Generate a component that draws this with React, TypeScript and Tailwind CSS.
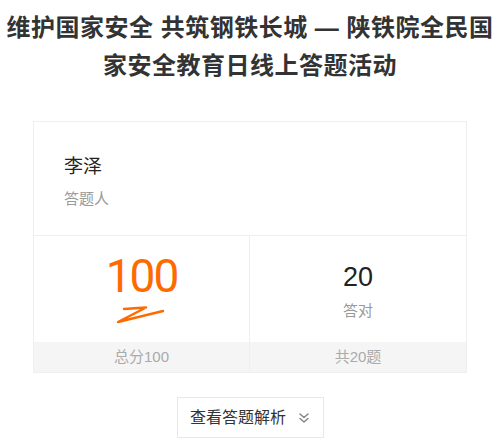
export default function App() {
  return (
    <div className="w-[500px] h-[446px] bg-white font-['Liberation_Sans','Noto_Sans_CJK_SC',sans-serif] text-[#333]">
      <h1 className="pt-[9px] text-center text-[24px] leading-[38px] font-bold text-[#333] tracking-[0.5px]">
        维护国家安全 共筑钢铁长城 — 陕铁院全民国
        <br />
        家安全教育日线上答题活动
      </h1>

      <div className="mx-[33px] mt-[36px] border border-[#efefef]">
        {/* 答题人 */}
        <div className="h-[114px] px-[30px] pt-[31px] border-b border-[#efefef]">
          <div className="text-[19px] leading-[28px] text-[#222]">李泽</div>
          <div className="mt-[7px] text-[15px] leading-[22px] text-[#999]">答题人</div>
        </div>

        <div className="grid grid-cols-2">
          <div className="border-r border-[#efefef]">
            <div className="h-[106px] flex flex-col items-center pt-[15px]">
              <div className="font-['Roboto',sans-serif] text-[46px] leading-[50px] text-[#ff6a00] tracking-[-2px]">100</div>
              <svg width="54" height="22" viewBox="0 0 54 22" className="-ml-[4px] mt-[4px]">
                <path
                  d="M11 4 L33 2.5 L5 17 L50 6"
                  fill="none"
                  stroke="#ff6a00"
                  strokeWidth="2.4"
                  strokeLinecap="round"
                  strokeLinejoin="round"
                />
              </svg>
            </div>
            <div className="h-[30px] bg-[#f5f5f5] text-center text-[15px] leading-[30px] text-[#aaa]">总分100</div>
          </div>
          <div>
            <div className="h-[106px] flex flex-col items-center pt-[24px]">
              <div className="text-[27px] leading-[34px] text-[#222]">20</div>
              <div className="mt-[6px] text-[15px] leading-[22px] text-[#999]">答对</div>
            </div>
            <div className="h-[30px] bg-[#f5f5f5] text-center text-[15px] leading-[30px] text-[#aaa]">共20题</div>
          </div>
        </div>
      </div>

      <div className="flex justify-center mt-[24px]">
        <button className="h-[41px] w-[147px] flex items-center justify-center gap-[12px] border border-[#e8e8e8] bg-white text-[16px] text-[#333]">
          <span>查看答题解析</span>
          <svg width="12" height="12" viewBox="0 0 12 12">
            <path d="M2 2 L6 5.5 L10 2 M2 6.5 L6 10 L10 6.5" fill="none" stroke="#888" strokeWidth="1.6" strokeLinecap="round" strokeLinejoin="round" />
          </svg>
        </button>
      </div>
    </div>
  );
}
